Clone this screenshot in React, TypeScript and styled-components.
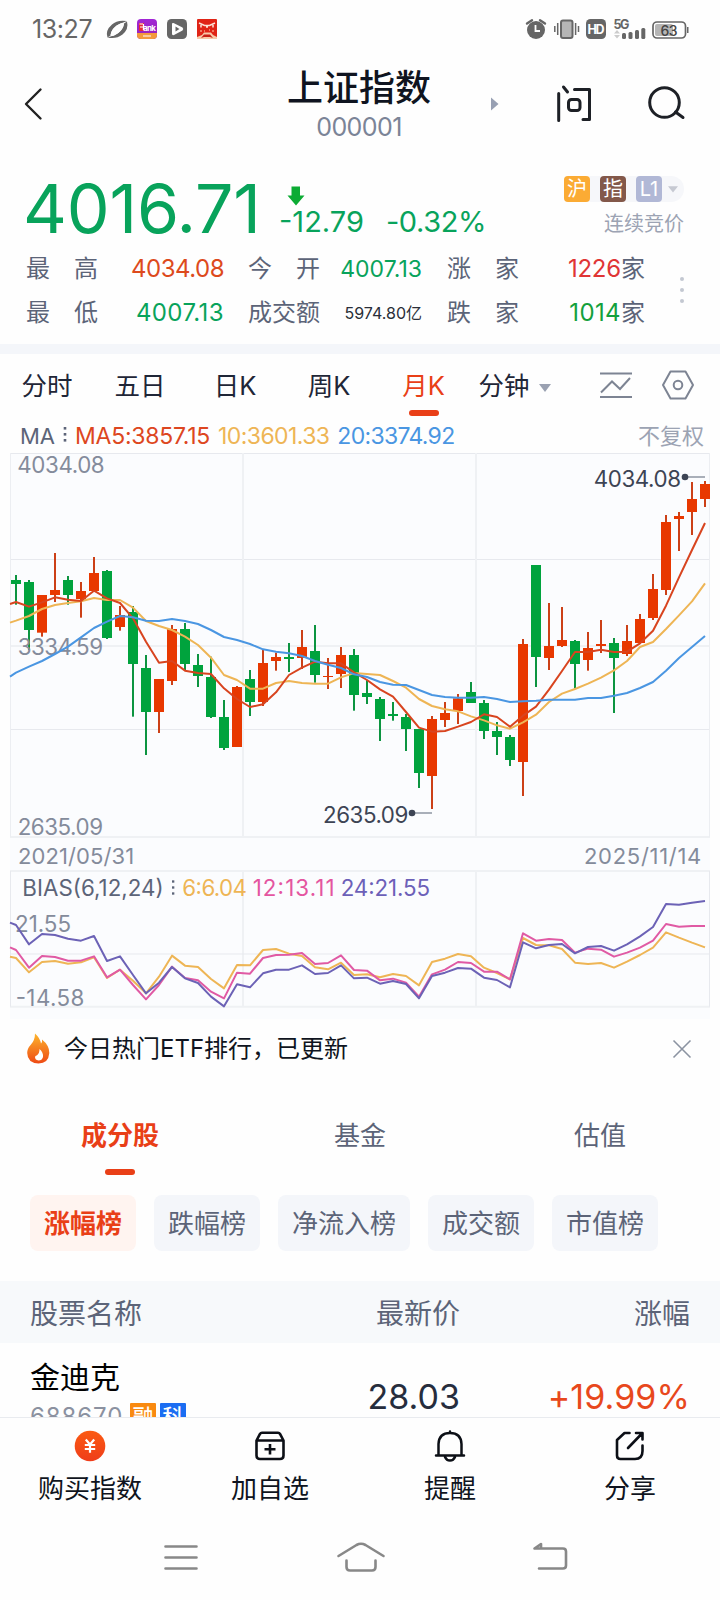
import React from "react";
import styled, { createGlobalStyle } from "styled-components";

const red = "#e93f17";
const up = "#e83800";
const down = "#00a33d";
const green = "#08a35b";
const slate = "#5c6478";
const ink = "#0f1420";
const fonts = `Inter, "Noto Sans CJK SC", sans-serif`;

const Global = createGlobalStyle`
  * { box-sizing: border-box; }
  body { margin: 0; background: #fefefe; font-family: ${fonts}; color: ${ink}; }
  svg { display: block; flex: none; overflow: visible; }
`;

const Screen = styled.div`
  width: 720px;
  height: 1600px;
  overflow: hidden;
  display: flex;
  flex-direction: column;
  background: #fefefe;
`;

const Digits = styled.span<{ $size: number; $color?: string; $track?: number }>`
  font-size: ${(p) => p.$size}px;
  line-height: 1;
  color: ${(p) => p.$color ?? "inherit"};
  letter-spacing: ${(p) => p.$track ?? 0}px;
  white-space: nowrap;
`;

/* status bar */
const StatusBar = styled.div`
  height: 58px;
  flex: none;
  display: flex;
  align-items: center;
  justify-content: space-between;
  padding: 0 31px 0 32px;
`;
const StatusGroup = styled.div<{ $gap: number }>`
  display: flex;
  align-items: center;
  gap: ${(p) => p.$gap}px;
`;

/* title bar */
const TitleBar = styled.header`
  height: 110px;
  flex: none;
  display: grid;
  grid-template-columns: 240px 240px 76px 36px 56px 36px;
  align-items: center;
  padding-bottom: 20px;
`;
const BackButton = styled.div`
  padding: 2px 0 0 23px;
`;
const TitleStack = styled.div`
  display: flex;
  flex-direction: column;
  align-items: center;
  align-self: start;
  gap: 6px;
  padding: 9px 2px 0 0;
`;
const Title = styled.h1`
  margin: 0;
  font-size: 36px;
  line-height: 42px;
  font-weight: 500;
`;
const Arrow = styled.div`
  padding: 2px 0 0 11px;
`;

/* quote */
const Quote = styled.section`
  height: 176px;
  flex: none;
  padding: 0 36px 0 26px;
`;
const QuoteTop = styled.div`
  display: flex;
  justify-content: space-between;
  height: 79px;
`;
const PriceGroup = styled.div`
  display: flex;
`;
const Price = styled.div`
  width: 256px;
  margin-left: -3px;
  padding-top: 6px;
`;
const Change = styled.div`
  padding-top: 18px;
`;
const ChangeArrow = styled.div`
  padding: 0 0 1px 8px;
`;
const ChangeValues = styled.div`
  display: flex;
  gap: 22px;
`;
const Market = styled.div`
  display: flex;
  flex-direction: column;
  align-items: flex-end;
  padding-top: 8px;
`;
const BadgeStrip = styled.div`
  display: flex;
  align-items: center;
  gap: 10px;
  height: 26px;
  padding-right: 6px;
  border-radius: 4px 13px 13px 4px;
  background: #f6f7fa;
`;
const Badge = styled.span<{ $bg: string }>`
  width: 26px;
  height: 26px;
  border-radius: 4px;
  background: ${(p) => p.$bg};
  color: #fff;
  font-size: 20px;
  line-height: 26px;
  text-align: center;
`;
const BadgeCaret = styled.div`
  margin-left: -4px;
`;
const Phase = styled.div`
  font-size: 20px;
  line-height: 24px;
  color: #9ca3b3;
  padding-top: 10px;
`;
const StatsRow = styled.div`
  display: flex;
  justify-content: space-between;
  align-items: center;
`;
const Stats = styled.div`
  display: grid;
  grid-template-columns: 72px 126px 24px 72px 102px 25px 72px 126px;
  grid-auto-rows: 44px;
  align-items: center;
  font-size: 24px;
  color: ${slate};
`;
const StatLabel = styled.span`
  display: flex;
  justify-content: space-between;
  line-height: 30px;
`;
const StatValue = styled.span`
  display: flex;
  justify-content: flex-end;
  align-items: center;
  line-height: 30px;
`;
const Gap = styled.span``;

const Divider = styled.div`
  height: 10px;
  flex: none;
  background: #f4f6fa;
`;

/* period tabs */
const Periods = styled.nav`
  height: 64px;
  flex: none;
  display: grid;
  grid-template-columns: 94px 92px 98px 90px 99px 62px 51px 60px 64px;
  align-items: center;
  font-size: 25.5px;
  color: #1f2637;
`;
const Period = styled.div<{ $active?: boolean }>`
  position: relative;
  height: 64px;
  line-height: 64px;
  text-align: center;
  white-space: nowrap;
  color: ${(p) => (p.$active ? red : "inherit")};
  &::after {
    content: "";
    display: ${(p) => (p.$active ? "block" : "none")};
    position: absolute;
    left: 50%;
    bottom: 2px;
    width: 30px;
    height: 6px;
    margin-left: -15px;
    border-radius: 3px;
    background: ${red};
  }
`;
const PeriodCaret = styled.div`
  padding: 3px 0 0 4px;
`;
const ToolIcon = styled.div`
  display: flex;
  justify-content: center;
  padding-bottom: 2px;
`;

/* chart */
const MaRow = styled.div`
  height: 35px;
  flex: none;
  display: flex;
  align-items: center;
  justify-content: space-between;
  padding: 0 16px 0 20px;
`;
const Legend = styled.div`
  display: flex;
  align-items: center;
  gap: 8px;
  padding-top: 1px;
`;
const Adjust = styled.span`
  font-size: 22px;
  line-height: 30px;
  color: #9ca3b3;
`;
const ChartPanel = styled.div`
  flex: none;
  height: 566px;
  margin: 0 10px;
  background: #fbfcfe;
`;
const DateRow = styled.div`
  height: 32px;
  display: flex;
  align-items: center;
  justify-content: space-between;
  padding: 3px 8px 0;
`;

/* hot banner */
const Hot = styled.div`
  height: 63px;
  flex: none;
  display: flex;
  align-items: center;
  padding: 0 28px 3px 26px;
`;
const HotText = styled.span`
  flex: 1;
  padding-left: 13px;
  font-size: 24px;
  line-height: 32px;
`;

/* lists */
const ListTabs = styled.nav`
  height: 113px;
  flex: none;
  display: grid;
  grid-template-columns: repeat(3, 1fr);
  padding-top: 34px;
`;
const ListTab = styled.div<{ $active?: boolean }>`
  position: relative;
  height: 60px;
  text-align: center;
  font-size: 26px;
  line-height: 40px;
  color: ${(p) => (p.$active ? red : slate)};
  font-weight: ${(p) => (p.$active ? 700 : 400)};
  &::after {
    content: "";
    display: ${(p) => (p.$active ? "block" : "none")};
    position: absolute;
    left: 50%;
    bottom: 1px;
    width: 30px;
    height: 6px;
    margin-left: -15px;
    border-radius: 3px;
    background: ${red};
  }
`;
const Chips = styled.div`
  flex: none;
  display: flex;
  gap: 18px;
  height: 86px;
  padding-left: 30px;
`;
const Chip = styled.div<{ $active?: boolean }>`
  height: 56px;
  padding: 0 14px;
  border-radius: 8px;
  font-size: 26px;
  line-height: 58px;
  white-space: nowrap;
  background: ${(p) => (p.$active ? "#fff4f0" : "#f4f6fa")};
  color: ${(p) => (p.$active ? red : slate)};
  font-weight: ${(p) => (p.$active ? 700 : 400)};
`;
const TableHead = styled.div`
  flex: none;
  height: 62px;
  display: grid;
  grid-template-columns: 230px 200px 230px;
  padding: 4px 30px 0;
  align-items: center;
  background: #f7f9fb;
  font-size: 28px;
  line-height: 40px;
  color: ${slate};
`;
const Cell = styled.div<{ $right?: boolean }>`
  text-align: ${(p) => (p.$right ? "right" : "left")};
`;
const StockRow = styled.div`
  flex: none;
  height: 74px;
  overflow: hidden;
  display: grid;
  grid-template-columns: 230px 200px 230px;
  padding: 0 30px;
`;
const StockName = styled.div`
  font-size: 30px;
  line-height: 40px;
  padding-top: 14px;
  color: #000;
`;
const StockMeta = styled.div`
  display: flex;
  align-items: center;
  gap: 4px;
  padding-top: 5px;
`;
const Code = styled.div`
  display: flex;
  width: 96px;
  padding-top: 3px;
`;
const Tag = styled.span<{ $bg: string }>`
  width: 26px;
  height: 26px;
  background: ${(p) => p.$bg};
  color: #fff;
  font-size: 21px;
  font-weight: 500;
  line-height: 28px;
  text-align: center;
  border-radius: 1px;
`;
const Amount = styled.div`
  text-align: right;
  padding-top: 37px;
`;

/* bottom bars */
const ActionBar = styled.footer`
  flex: none;
  height: 101px;
  display: grid;
  grid-template-columns: repeat(4, 1fr);
  border-top: 1px solid #e9ebef;
`;
const Action = styled.div`
  display: flex;
  flex-direction: column;
  align-items: center;
  padding-top: 12px;
  gap: 6px;
  font-size: 26px;
  line-height: 42px;
`;
const SystemNav = styled.div`
  flex: 1;
  display: grid;
  grid-template-columns: 180px 180px 197px;
  justify-items: center;
  padding: 25px 0 0 91px;
`;

/* candle = [rising, high, body top, body bottom, low], in thirds of a pixel */
const candles: [number, number, number, number, number][] = [
  [0, 405, 420, 432, 494], [0, 420, 426, 570, 630], [1, 465, 465, 578, 590], [1, 339, 450, 465, 486],
  [0, 408, 420, 465, 494], [1, 426, 453, 477, 533], [1, 351, 399, 453, 455], [0, 390, 393, 594, 597],
  [1, 498, 525, 561, 572], [0, 498, 516, 672, 830], [0, 645, 684, 816, 945], [1, 717, 717, 816, 879],
  [1, 555, 567, 723, 735], [0, 549, 567, 672, 690], [0, 642, 675, 708, 741], [0, 650, 711, 831, 834],
  [0, 780, 831, 924, 930], [1, 738, 741, 921, 921], [0, 690, 717, 786, 828], [1, 630, 669, 786, 798],
  [1, 638, 651, 663, 692], [0, 609, 651, 657, 696], [1, 570, 621, 654, 687], [0, 555, 633, 705, 728],
  [1, 654, 708, 711, 747], [1, 621, 645, 702, 744], [0, 627, 645, 765, 812], [0, 720, 759, 771, 792],
  [0, 771, 777, 837, 903], [0, 786, 822, 828, 842], [0, 822, 831, 867, 933], [0, 867, 867, 999, 1044],
  [1, 828, 837, 1008, 1107], [1, 786, 819, 840, 861], [1, 762, 775, 813, 852], [0, 726, 756, 789, 789],
  [0, 780, 789, 873, 897], [0, 846, 873, 891, 945], [0, 885, 891, 960, 978], [1, 597, 612, 966, 1068],
  [0, 375, 375, 651, 741], [1, 489, 618, 654, 690], [1, 501, 600, 618, 621], [0, 600, 603, 672, 745],
  [1, 576, 624, 660, 692], [1, 540, 612, 618, 639], [0, 594, 609, 654, 819], [1, 555, 603, 642, 648],
  [1, 522, 537, 609, 609], [1, 402, 447, 534, 540], [1, 225, 246, 450, 465], [1, 216, 228, 237, 333],
  [1, 126, 177, 216, 285], [1, 123, 132, 177, 201],
];

const ma5 = [492, 486, 500, 487, 472, 479, 483, 452, 475, 489, 535, 605, 668, 663, 692, 699, 702, 745, 777, 801, 793, 757, 705, 683, 665, 670, 670, 697, 720, 748, 770, 816, 863, 875, 873, 860, 846, 823, 831, 860, 827, 800, 749, 693, 636, 636, 629, 636, 635, 610, 572, 497, 412, 330, 249];
const ma10 = [548, 542, 528, 507, 495, 489, 484, 474, 480, 480, 503, 543, 558, 570, 590, 615, 653, 705, 720, 746, 746, 729, 723, 729, 731, 731, 712, 699, 702, 705, 723, 743, 777, 798, 808, 814, 829, 841, 856, 866, 847, 824, 786, 761, 747, 731, 713, 691, 663, 621, 606, 567, 526, 484, 430];
const ma20 = [710, 698, 680, 663, 642, 620, 592, 564, 545, 528, 532, 542, 543, 537, 543, 552, 570, 591, 600, 612, 628, 635, 640, 648, 663, 674, 684, 703, 711, 726, 734, 735, 750, 765, 771, 773, 773, 771, 777, 786, 784, 782, 779, 779, 779, 774, 774, 767, 759, 744, 726, 692, 654, 621, 588];
const bias6 = [290, 294, 337, 306, 303, 311, 307, 292, 354, 329, 362, 400, 350, 287, 317, 321, 357, 385, 315, 316, 270, 267, 281, 288, 322, 328, 308, 345, 343, 352, 342, 348, 376, 306, 296, 282, 289, 323, 339, 358, 234, 255, 256, 267, 308, 312, 309, 323, 305, 285, 263, 217, 233, 248, 262];
const bias12 = [262, 270, 323, 288, 291, 302, 302, 289, 352, 329, 375, 418, 375, 320, 354, 361, 395, 415, 338, 341, 294, 285, 284, 279, 312, 309, 286, 330, 332, 361, 356, 368, 410, 343, 329, 306, 309, 335, 335, 358, 220, 242, 237, 240, 278, 266, 269, 290, 278, 263, 242, 192, 200, 198, 198];
const bias24 = [188, 195, 253, 222, 225, 236, 242, 228, 303, 289, 345, 400, 368, 321, 355, 369, 410, 439, 373, 382, 340, 329, 329, 316, 342, 339, 316, 355, 353, 371, 363, 372, 415, 348, 338, 324, 326, 353, 360, 382, 247, 265, 255, 252, 280, 261, 258, 272, 253, 229, 201, 132, 134, 128, 123];

const cx = (i: number) => 18 + i * 39;
const line = (ys: number[]) => ys.map((y, i) => `${i === 0 ? 0 : cx(i - 1)},${y}`).join(" ");

const Trend = ({ data, color }: { data: number[]; color: string }) => (
  <polyline points={line(data)} fill="none" stroke={color} strokeWidth={6} strokeLinejoin="round" />
);

const AxisText = ({ x, y, w, color = "#848b9b", children }: { x: number; y: number; w: number; color?: string; children: string }) => (
  <text x={x} y={y} textLength={w} fontSize={67} fontFamily={fonts} fill={color}>{children}</text>
);

const Candles = () => (
  <svg width="700" height="385" viewBox="0 39 2100 1155">
    <g stroke="#e7e9ee" strokeWidth="3">
      <path d="M0 40.5H2100M0 358.5H2100M0 868.5H2100" />
      <path d="M0 618H2100M0 1191H2100M699 39V1191M1398 39V1191" stroke="#eff1f4" strokeWidth="6" />
      <path d="M1.5 39V1191M2098.5 39V1191" stroke="#eceef2" />
    </g>
    {candles.map(([rise, hi, top, bot, lo], i) => (
      <g key={i} fill={rise ? up : down}>
        <rect x={cx(i) - 3} y={hi} width="6" height={lo - hi} fill={rise ? "#cc4017" : "#0c9440"} />
        <rect x={cx(i) - 15} y={top} width="30" height={bot - top} />
      </g>
    ))}
    <AxisText x={22} y={99} w={262}>4034.08</AxisText>
    <AxisText x={23} y={645} w={256}>3334.59</AxisText>
    <AxisText x={23} y={1185} w={256}>2635.09</AxisText>
    <Trend data={ma10} color="#eeb555" />
    <Trend data={ma5} color="#d8441f" />
    <Trend data={ma20} color="#4a96e2" />
    <AxisText x={1751} y={141} w={262} color="#3d4454">4034.08</AxisText>
    <path d="M2025 111H2085M1212 1119H1266" stroke="#8f95a3" strokeWidth="5" />
    <circle cx="2025" cy="111" r="10" fill="#3d4454" />
    <AxisText x={939} y={1149} w={256} color="#3d4454">2635.09</AxisText>
    <circle cx="1206" cy="1119" r="10" fill="#3d4454" />
  </svg>
);

const LegendText = ({ x, w, color, children }: { x: number; w: number; color: string; children: string }) => (
  <text x={x} y={108} textLength={w} fontSize={67} fontFamily={fonts} fill={color}>{children}</text>
);

const Bias = () => (
  <svg width="700" height="148" viewBox="0 30 2100 444">
    <g stroke="#eff1f4" strokeWidth="6">
      <path d="M0 33H2100M0 440H2100M699 33V440M1398 33V440" />
      <path d="M0 282H2100M1.5 33V440M2098.5 33V440" strokeWidth="3" stroke="#e7e9ee" />
    </g>
    <LegendText x={37} w={424} color={slate}>BIAS(6,12,24)</LegendText>
    <g fill={slate}>
      <rect x="486" y="61" width="7" height="7" />
      <rect x="486" y="79" width="7" height="7" />
      <rect x="486" y="97" width="7" height="7" />
    </g>
    <LegendText x={517} w={194} color="#eeb555">6:6.04</LegendText>
    <LegendText x={728} w={246} color="#e455a0">12:13.11</LegendText>
    <LegendText x={992} w={268} color="#6c60b8">24:21.55</LegendText>
    <AxisText x={15} y={215} w={168}>21.55</AxisText>
    <AxisText x={17} y={438} w={206}>-14.58</AxisText>
    <Trend data={bias6} color="#eeb555" />
    <Trend data={bias12} color="#e05aa4" />
    <Trend data={bias24} color="#6c62b6" />
  </svg>
);

const Dots = () => (
  <svg width="4" height="18" viewBox="0 0 4 18" fill={slate}>
    <rect x="0.7" y="0" width="2.6" height="2.6" />
    <rect x="0.7" y="6" width="2.6" height="2.6" />
    <rect x="0.7" y="12" width="2.6" height="2.6" />
  </svg>
);

const StatusLeft = () => (
  <svg width="112" height="22" viewBox="106 18 112 22">
    <path d="M107.500 37.500Q105 30.500 112 24.500Q117 19.500 127 21L119.500 24Q111 28 110.500 35.500ZM127 21.500Q129 29 122.500 34.500Q116 39.500 107.500 37.500L115 35Q123.500 30.500 124 23.500Z" fill="#666" />
    <path d="M119.500 24Q113 26.500 110.500 34.500Q112 37 115 35Q122 31.500 124 24.500Q123 22 119.500 24Z" fill="#fefefe" />
    <defs>
      <linearGradient id="bankbg" x2="0" y2="1"><stop offset="0" stopColor="#a126d6" /><stop offset="1" stopColor="#9823b4" /></linearGradient>
      <clipPath id="bank"><rect x="137" y="19" width="20" height="20" rx="4" /></clipPath>
    </defs>
    <g clipPath="url(#bank)">
      <rect x="137" y="19" width="20" height="20" fill="url(#bankbg)" />
      <rect x="137" y="33" width="20" height="6" fill="#f39a3c" />
      <rect x="139" y="23" width="5" height="8" fill="#e62d35" />
    </g>
    <text x="143" y="31" fontSize="8" fontWeight="700" fontFamily={fonts} fill="#fff" textLength="13">ank</text>
    <path d="M139.500 24H143M140 27H143.500M143.500 24V30M143 36H151" stroke="#fff" strokeWidth="1.200" />
    <rect x="167" y="19" width="20" height="20" rx="4.500" fill="#666" />
    <path d="M172 24Q172 22.500 173.500 23L182.500 27.500Q184 29 182.500 30.500L174 35Q172 35.500 172 34Z" fill="#fff" />
    <path d="M175.500 26.500L179.500 29L175.500 31.500Z" fill="#666" />
    <rect x="197" y="19" width="20" height="20" rx="1" fill="#e02416" />
    <path d="M199 23L204.500 25.500H209.500L215 23M201 25V27.500M213 25V27.500M206 27H208" fill="none" stroke="#fbe4d8" strokeWidth="1.500" />
    <path d="M200 31H202M204 31H205M209 30H210M212 31H214" stroke="#f59a80" strokeWidth="1.500" />
    <path d="M197 39V37L202 35L204 32.500H211L213 35L217 37V39Z" fill="#f8c9a8" />
    <path d="M201 38L204 34.500H210L213 38L210 37H204Z" fill="#c82016" />
  </svg>
);

const StatusRight = () => (
  <svg width="164" height="24" viewBox="525 17 164 24">
    <g fill="#666" stroke="none">
      <circle cx="536" cy="30" r="9" />
      <path d="M527 23.500L532 20.200M540 20.200L545 23.500" stroke="#666" strokeWidth="2.400" strokeLinecap="round" />
      <path d="M535.500 25V31H540" fill="none" stroke="#fff" strokeWidth="1.800" />
      <rect x="561" y="20.500" width="11.500" height="17.500" rx="2" fill="#b5b5b5" stroke="#666" strokeWidth="2" />
      <path d="M557.700 23V35M554.800 26V32M575.600 23V35M578.500 26V32" stroke="#666" strokeWidth="1.500" />
      <rect x="586" y="19" width="20" height="20" rx="4.500" />
      <rect x="622" y="33" width="4" height="6" rx="1.500" />
      <rect x="628.500" y="32" width="4" height="7" rx="1.500" />
      <rect x="635" y="30" width="4" height="9" rx="1.500" />
      <rect x="641.300" y="28" width="4" height="11" rx="1.500" />
      <path d="M614 33.500L617 30L620 33.500ZM614 35L617 38.500L620 35Z" fill="#ccc" />
      <rect x="653" y="22" width="32.500" height="16" rx="4" fill="#fff" stroke="#666" strokeWidth="1.700" />
      <rect x="655" y="24" width="18" height="12" rx="2" fill="#b5b5b5" />
      <rect x="687" y="27" width="1.500" height="6" />
    </g>
    <g fontFamily={fonts} fontWeight="700" fill="#666">
      <text x="587.500" y="33.500" fontSize="12.500" textLength="17" fill="#fff">HD</text>
      <text x="613.500" y="28.500" fontSize="12.500" textLength="16">5G</text>
      <text x="660.500" y="35.500" fontSize="14" textLength="17" fontWeight="500" fill="#444">63</text>
    </g>
  </svg>
);

const App = () => (
  <>
    <Global />
    <Screen>
      <StatusBar>
        <StatusGroup $gap={14}>
          <Digits $size={25} $color="#666" $track={-0.4}>13:27</Digits>
          <StatusLeft />
        </StatusGroup>
        <StatusRight />
      </StatusBar>

      <TitleBar>
        <BackButton>
          <svg width="20" height="34" viewBox="0 0 20 34" fill="none" stroke="#222" strokeWidth="2.400" strokeLinecap="round" strokeLinejoin="round">
            <path d="M17.500 2.500L3 17L17.500 31.500" />
          </svg>
        </BackButton>
        <TitleStack>
          <Title>上证指数</Title>
          <Digits $size={25} $color="#7b8497" $track={-0.6}>000001</Digits>
        </TitleStack>
        <Arrow>
          <svg width="8" height="14" viewBox="0 0 8 14"><path d="M0 0.500L7.500 7L0 13.500Z" fill="#98a0b3" /></svg>
        </Arrow>
        <svg width="36" height="38" viewBox="556 84 36 38" fill="none" stroke="#1d2026" strokeWidth="3" strokeLinecap="round" strokeLinejoin="round">
          <path d="M558.700 93.500V120.500M563.500 87L567.500 92M574.500 89.500H589.500V119.500H583" />
          <rect x="568.500" y="99.500" width="11.500" height="11" rx="3" />
        </svg>
        <span />
        <svg width="37" height="34" viewBox="648 87 37 34" fill="none" stroke="#1d2026" strokeWidth="3" strokeLinecap="round">
          <circle cx="664.500" cy="103.500" r="14.800" />
          <path d="M675.500 113L683 118.500" />
        </svg>
      </TitleBar>

      <Quote>
        <QuoteTop>
          <PriceGroup>
            <Price><Digits $size={68} $color={green} $track={-0.2}>4016.71</Digits></Price>
            <Change>
              <ChangeArrow>
                <svg width="18" height="20" viewBox="0 0 18 20"><path d="M4.500 0.500H13V9.500H17.500L9 19.500L0.500 9.500H4.500Z" fill="#0cab34" /></svg>
              </ChangeArrow>
              <ChangeValues>
                <Digits $size={29} $color={green}>-12.79</Digits>
                <Digits $size={29} $color={green} $track={-0.4}>-0.32%</Digits>
              </ChangeValues>
            </Change>
          </PriceGroup>
          <Market>
            <BadgeStrip>
              <Badge $bg="#fbab34">沪</Badge>
              <Badge $bg="#83584a">指</Badge>
              <Badge $bg="#b1b8d6">L1</Badge>
              <BadgeCaret>
                <svg width="10" height="7" viewBox="0 0 10 7"><path d="M0 0.300H10L5 6.500Z" fill="#c6c9d2" /></svg>
              </BadgeCaret>
            </BadgeStrip>
            <Phase>连续竞价</Phase>
          </Market>
        </QuoteTop>
        <StatsRow>
          <Stats>
            <StatLabel><span>最</span><span>高</span></StatLabel>
            <StatValue><Digits $size={24} $color="#dd4a1c" $track={-0.5}>4034.08</Digits></StatValue>
            <Gap />
            <StatLabel><span>今</span><span>开</span></StatLabel>
            <StatValue><Digits $size={23} $color={green}>4007.13</Digits></StatValue>
            <Gap />
            <StatLabel><span>涨</span><span>家</span></StatLabel>
            <StatValue><Digits $size={24} $color="#e03535" $track={-0.2}>1226</Digits>家</StatValue>

            <StatLabel><span>最</span><span>低</span></StatLabel>
            <StatValue><Digits $size={24} $color={green} $track={0.4}>4007.13</Digits></StatValue>
            <Gap />
            <StatLabel>成交额</StatLabel>
            <StatValue><Digits $size={16} $color="#2a2e38">5974.80亿</Digits></StatValue>
            <Gap />
            <StatLabel><span>跌</span><span>家</span></StatLabel>
            <StatValue><Digits $size={24} $color="#14a03c" $track={0.4}>1014</Digits>家</StatValue>
          </Stats>
          <svg width="4" height="28" viewBox="0 0 4 28" fill="#c3c8d1">
            <circle cx="2" cy="2" r="2" /><circle cx="2" cy="13" r="2" /><circle cx="2" cy="24" r="2" />
          </svg>
        </StatsRow>
      </Quote>

      <Divider />

      <Periods>
        <Period>分时</Period>
        <Period>五日</Period>
        <Period>日K</Period>
        <Period>周K</Period>
        <Period $active>月K</Period>
        <Period>分钟</Period>
        <PeriodCaret>
          <svg width="12" height="8" viewBox="0 0 12 8"><path d="M0 0H12L6 8Z" fill="#9aa1b1" /></svg>
        </PeriodCaret>
        <ToolIcon>
          <svg width="32" height="27" viewBox="0 0 32 27" fill="none" stroke="#7d8493" strokeWidth="2">
            <path d="M0 1.500H32M0 25H32M1 20.500L12 9.500L20 17L30 6" />
          </svg>
        </ToolIcon>
        <ToolIcon>
          <svg width="32" height="30" viewBox="0 0 32 30" fill="none" stroke="#7d8493" strokeWidth="2" strokeLinejoin="round">
            <path d="M8.500 1.500H23.500L31 15L23.500 28.500H8.500L1 15Z" /><circle cx="16" cy="15" r="4.300" />
          </svg>
        </ToolIcon>
      </Periods>

      <MaRow>
        <Legend>
          <Digits $size={22} $color={slate} $track={0}>MA</Digits>
          <Dots />
          <Digits $size={23} $color="#dd4620" $track={-0.25}>MA5:3857.15</Digits>
          <Digits $size={23} $color="#eeb555" $track={-0.6}>10:3601.33</Digits>
          <Digits $size={23} $color="#4a96e2" $track={-0.7}>20:3374.92</Digits>
        </Legend>
        <Adjust>不复权</Adjust>
      </MaRow>

      <ChartPanel>
        <Candles />
        <DateRow>
          <Digits $size={22} $color="#848b9b" $track={0.1}>2021/05/31</Digits>
          <Digits $size={22} $color="#848b9b" $track={0.7}>2025/11/14</Digits>
        </DateRow>
        <Bias />
      </ChartPanel>

      <Hot>
        <svg width="25" height="32" viewBox="0 0 25 32">
          <defs><linearGradient id="fire" x2="0" y2="1"><stop offset="0" stopColor="#fdb52c" /><stop offset="1" stopColor="#ee4a14" /></linearGradient></defs>
          <path d="M9 0.500Q14 5 15 10.500Q16.500 9 16 6.500Q23.500 12.500 23.300 20Q22.500 30.500 12.500 30.500Q1.500 30 1.200 20Q1.200 15.500 5 11.500Q9 7 9 0.500Z" fill="url(#fire)" />
          <path d="M13.500 16Q17.500 19.500 17 24Q16 27.500 12.500 27.500Q9 27 9 24Q9.500 22 10.800 22.500Q13.500 20.500 13.500 16Z" fill="#fff" />
        </svg>
        <HotText>今日热门ETF排行，已更新</HotText>
        <svg width="20" height="20" viewBox="0 0 20 20" stroke="#8b93a1" strokeWidth="1.600"><path d="M1.500 1.500L18.500 18.500M18.500 1.500L1.500 18.500" /></svg>
      </Hot>

      <ListTabs>
        <ListTab $active>成分股</ListTab>
        <ListTab>基金</ListTab>
        <ListTab>估值</ListTab>
      </ListTabs>

      <Chips>
        <Chip $active>涨幅榜</Chip>
        <Chip>跌幅榜</Chip>
        <Chip>净流入榜</Chip>
        <Chip>成交额</Chip>
        <Chip>市值榜</Chip>
      </Chips>

      <TableHead>
        <Cell>股票名称</Cell>
        <Cell $right>最新价</Cell>
        <Cell $right>涨幅</Cell>
      </TableHead>
      <StockRow>
        <div>
          <StockName>金迪克</StockName>
          <StockMeta>
            <Code><Digits $size={24} $color="#8b91a0" $track={0.9}>688670</Digits></Code>
            <Tag $bg="#f98a10">融</Tag>
            <Tag $bg="#1b6df2">科</Tag>
          </StockMeta>
        </div>
        <Amount><Digits $size={34} $color="#262d3d">28.03</Digits></Amount>
        <Amount><Digits $size={34} $color="#e8481c" $track={0.1}>+19.99%</Digits></Amount>
      </StockRow>

      <ActionBar>
        <Action>
          <svg width="32" height="32" viewBox="0 0 32 32">
            <defs><linearGradient id="coin" x2="0" y2="1"><stop offset="0" stopColor="#fb5a12" /><stop offset="1" stopColor="#ef3d1a" /></linearGradient></defs>
            <circle cx="16" cy="16" r="15.300" fill="url(#coin)" />
            <path d="M11.800 9.500L16 14.500L20.200 9.500M16 14.500V22.800M10.800 15H21.200M10.800 19H21.200" fill="none" stroke="#fff" strokeWidth="2.200" />
          </svg>
          购买指数
        </Action>
        <Action>
          <svg width="32" height="32" viewBox="0 0 32 32" fill="none" stroke="#0c0f16" strokeWidth="2.600" strokeLinejoin="round">
            <path d="M2.500 10.500L6 3.800Q6.600 2.800 8 2.800H24Q25.400 2.800 26 3.800L29.500 10.500V25.500Q29.500 29 26 29H6Q2.500 29 2.500 25.500ZM2.500 10.500H29.500M16 14V24.500M10.500 19.200H21.500" />
          </svg>
          加自选
        </Action>
        <Action>
          <svg width="32" height="32" viewBox="0 0 32 32" fill="none" stroke="#0c0f16" strokeWidth="2.500" strokeLinecap="round">
            <path d="M2 25.500H30M4.500 25V14Q5 3 16 3Q27 3 27.500 14V25M16 1.500V3M11 27Q12.500 30.500 16 30.500Q19.500 30.500 21 27" />
          </svg>
          提醒
        </Action>
        <Action>
          <svg width="32" height="32" viewBox="0 0 32 32" fill="none" stroke="#0c0f16" strokeWidth="2.600" strokeLinecap="round" strokeLinejoin="round">
            <path d="M15.500 3H10.500L3 10V25.500Q3 29 6.500 29H21Q28.500 29 28.500 21V15.500M14 18L27.500 4M22 3H28.500V9.500" />
          </svg>
          分享
        </Action>
      </ActionBar>

      <SystemNav>
        <svg width="34" height="28" viewBox="0 0 34 28" stroke="#888" strokeWidth="2.600" strokeLinecap="round"><path d="M1.500 3.500H32.500M1.500 14.500H32.500M1.500 25.500H32.500" /></svg>
        <svg width="48" height="30" viewBox="0 0 48 30" fill="none" stroke="#888" strokeWidth="2.600" strokeLinecap="round" strokeLinejoin="round">
          <path d="M1.500 13L19.500 2Q24 -0.500 28.500 2L46.500 13M9.500 17.500V24Q9.500 27.500 13 27.500H35Q38.500 27.500 38.500 24V17.500" />
        </svg>
        <svg width="36" height="28" viewBox="0 0 36 28" fill="none" stroke="#888" strokeWidth="2.600" strokeLinecap="round" strokeLinejoin="round">
          <path d="M3 5.500H31Q34 5.500 34 8.500V22.500Q34 25.500 31 25.500H7M2.500 5.500L9 1V5.500" />
        </svg>
      </SystemNav>
    </Screen>
  </>
);

export default App;
